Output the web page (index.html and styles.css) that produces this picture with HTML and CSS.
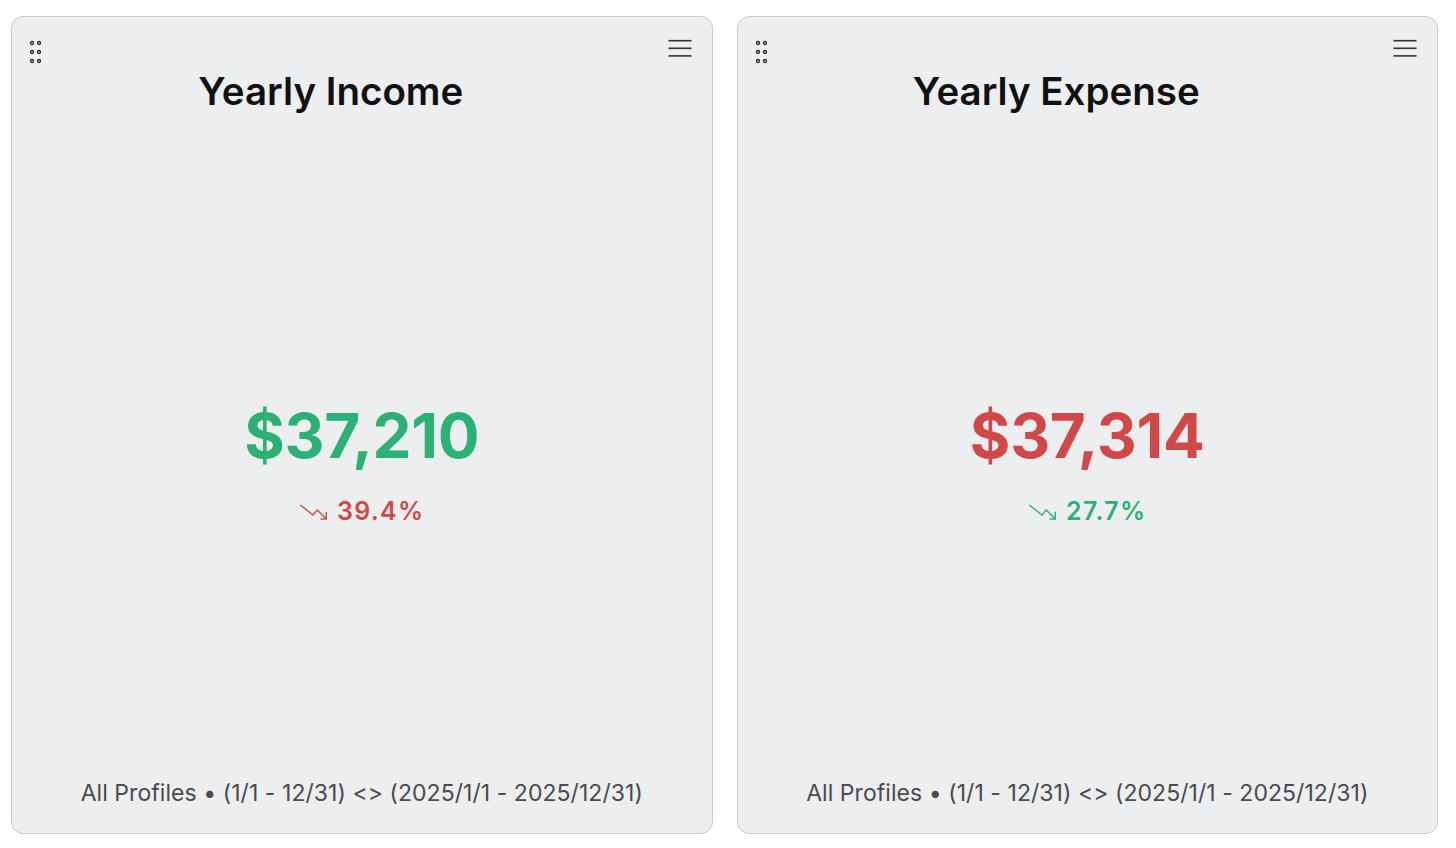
FILE: index.html
```html
<!DOCTYPE html>
<html lang="en">
<head>
<meta charset="utf-8">
<title>Yearly widgets</title>
<link rel="stylesheet" href="styles.css">
</head>
<body>
<main class="board">
  <section class="card">
    <svg class="grip" width="20" height="28" viewBox="0 0 20 28" aria-hidden="true">
      <g fill="none" stroke="#222" stroke-width="1.3">
        <circle cx="6" cy="5" r="1.5"/><circle cx="13" cy="5" r="1.5"/>
        <circle cx="6" cy="14" r="1.5"/><circle cx="13" cy="14" r="1.5"/>
        <circle cx="6" cy="23" r="1.5"/><circle cx="13" cy="23" r="1.5"/>
      </g>
    </svg>
    <button class="menu" aria-label="Menu">
      <svg width="24" height="24" viewBox="0 0 24 24" aria-hidden="true">
        <g stroke="#333" stroke-width="1.6" stroke-linecap="butt">
          <line x1="0.5" y1="4.7" x2="23.5" y2="4.7"/>
          <line x1="0.5" y1="12.3" x2="23.5" y2="12.3"/>
          <line x1="0.5" y1="19.9" x2="23.5" y2="19.9"/>
        </g>
      </svg>
    </button>
    <h2 class="title">Yearly Income</h2>
    <div class="body">
      <div class="value good">$37,210</div>
      <div class="delta bad">
        <svg class="trend" width="29" height="18" viewBox="0 0 29 18" aria-hidden="true">
          <g fill="none" stroke="currentColor" stroke-width="1.4" stroke-linejoin="miter">
            <polyline points="1.3,2 14,12 18.3,7 27.3,16"/>
            <polyline points="27.3,8.7 27.3,16 21.5,16"/>
          </g>
        </svg>
        <span>39.4%</span>
      </div>
    </div>
    <p class="footer">All Profiles • (1/1 - 12/31) &lt;&gt; (2025/1/1 - 2025/12/31)</p>
  </section>

  <section class="card">
    <svg class="grip" width="20" height="28" viewBox="0 0 20 28" aria-hidden="true">
      <g fill="none" stroke="#222" stroke-width="1.3">
        <circle cx="6" cy="5" r="1.5"/><circle cx="13" cy="5" r="1.5"/>
        <circle cx="6" cy="14" r="1.5"/><circle cx="13" cy="14" r="1.5"/>
        <circle cx="6" cy="23" r="1.5"/><circle cx="13" cy="23" r="1.5"/>
      </g>
    </svg>
    <button class="menu" aria-label="Menu">
      <svg width="24" height="24" viewBox="0 0 24 24" aria-hidden="true">
        <g stroke="#333" stroke-width="1.6" stroke-linecap="butt">
          <line x1="0.5" y1="4.7" x2="23.5" y2="4.7"/>
          <line x1="0.5" y1="12.3" x2="23.5" y2="12.3"/>
          <line x1="0.5" y1="19.9" x2="23.5" y2="19.9"/>
        </g>
      </svg>
    </button>
    <h2 class="title">Yearly Expense</h2>
    <div class="body">
      <div class="value bad">$37,314</div>
      <div class="delta good">
        <svg class="trend" width="29" height="18" viewBox="0 0 29 18" aria-hidden="true">
          <g fill="none" stroke="currentColor" stroke-width="1.4" stroke-linejoin="miter">
            <polyline points="1.3,2 14,12 18.3,7 27.3,16"/>
            <polyline points="27.3,8.7 27.3,16 21.5,16"/>
          </g>
        </svg>
        <span>27.7%</span>
      </div>
    </div>
    <p class="footer">All Profiles • (1/1 - 12/31) &lt;&gt; (2025/1/1 - 2025/12/31)</p>
  </section>
</main>
</body>
</html>
```

FILE: styles.css
```css
* { box-sizing: border-box; }

html, body {
  margin: 0;
  background: #ffffff;
  font-family: Inter, "Noto Sans", "Liberation Sans", sans-serif;
}

.board {
  display: grid;
  grid-template-columns: 1fr 1fr;
  gap: 24px;
  padding: 16px 18px 14px 11px;
  height: 848px;
}

.card {
  position: relative;
  display: flex;
  flex-direction: column;
  background: #edeef0;
  border: 1px solid #c9cacc;
  border-radius: 12px;
  min-height: 0;
}

.grip {
  position: absolute;
  left: 14px;
  top: 21px;
}

.menu {
  position: absolute;
  right: 20px;
  top: 19px;
  padding: 0;
  margin: 0;
  border: 0;
  background: transparent;
  width: 24px;
  height: 24px;
  display: block;
}

.menu svg { display: block; }

.title {
  margin: 51px 62px 0 0;
  text-align: center;
  font-size: 38.5px;
  line-height: 46px;
  font-weight: 600;
  color: #111;
  letter-spacing: 0;
}

.body {
  flex: 1;
  display: flex;
  flex-direction: column;
  align-items: center;
  justify-content: center;
  padding-top: 32px;
}

.value {
  font-size: 62px;
  line-height: 72px;
  font-weight: 700;
  letter-spacing: -0.3px;
}

.delta {
  margin-top: 24px;
  display: flex;
  align-items: center;
  gap: 9px;
  font-size: 25px;
  line-height: 30px;
  font-weight: 600;
  letter-spacing: 1.3px;
}

.trend { display: block; margin-top: 2px; }

.good { color: #2bb173; }
.bad { color: #d04848; }

.footer {
  margin: 0 0 26px;
  text-align: center;
  font-size: 23px;
  line-height: 28px;
  color: #4a4a4c;
  font-weight: 400;
  letter-spacing: 0.05px;
}
```
